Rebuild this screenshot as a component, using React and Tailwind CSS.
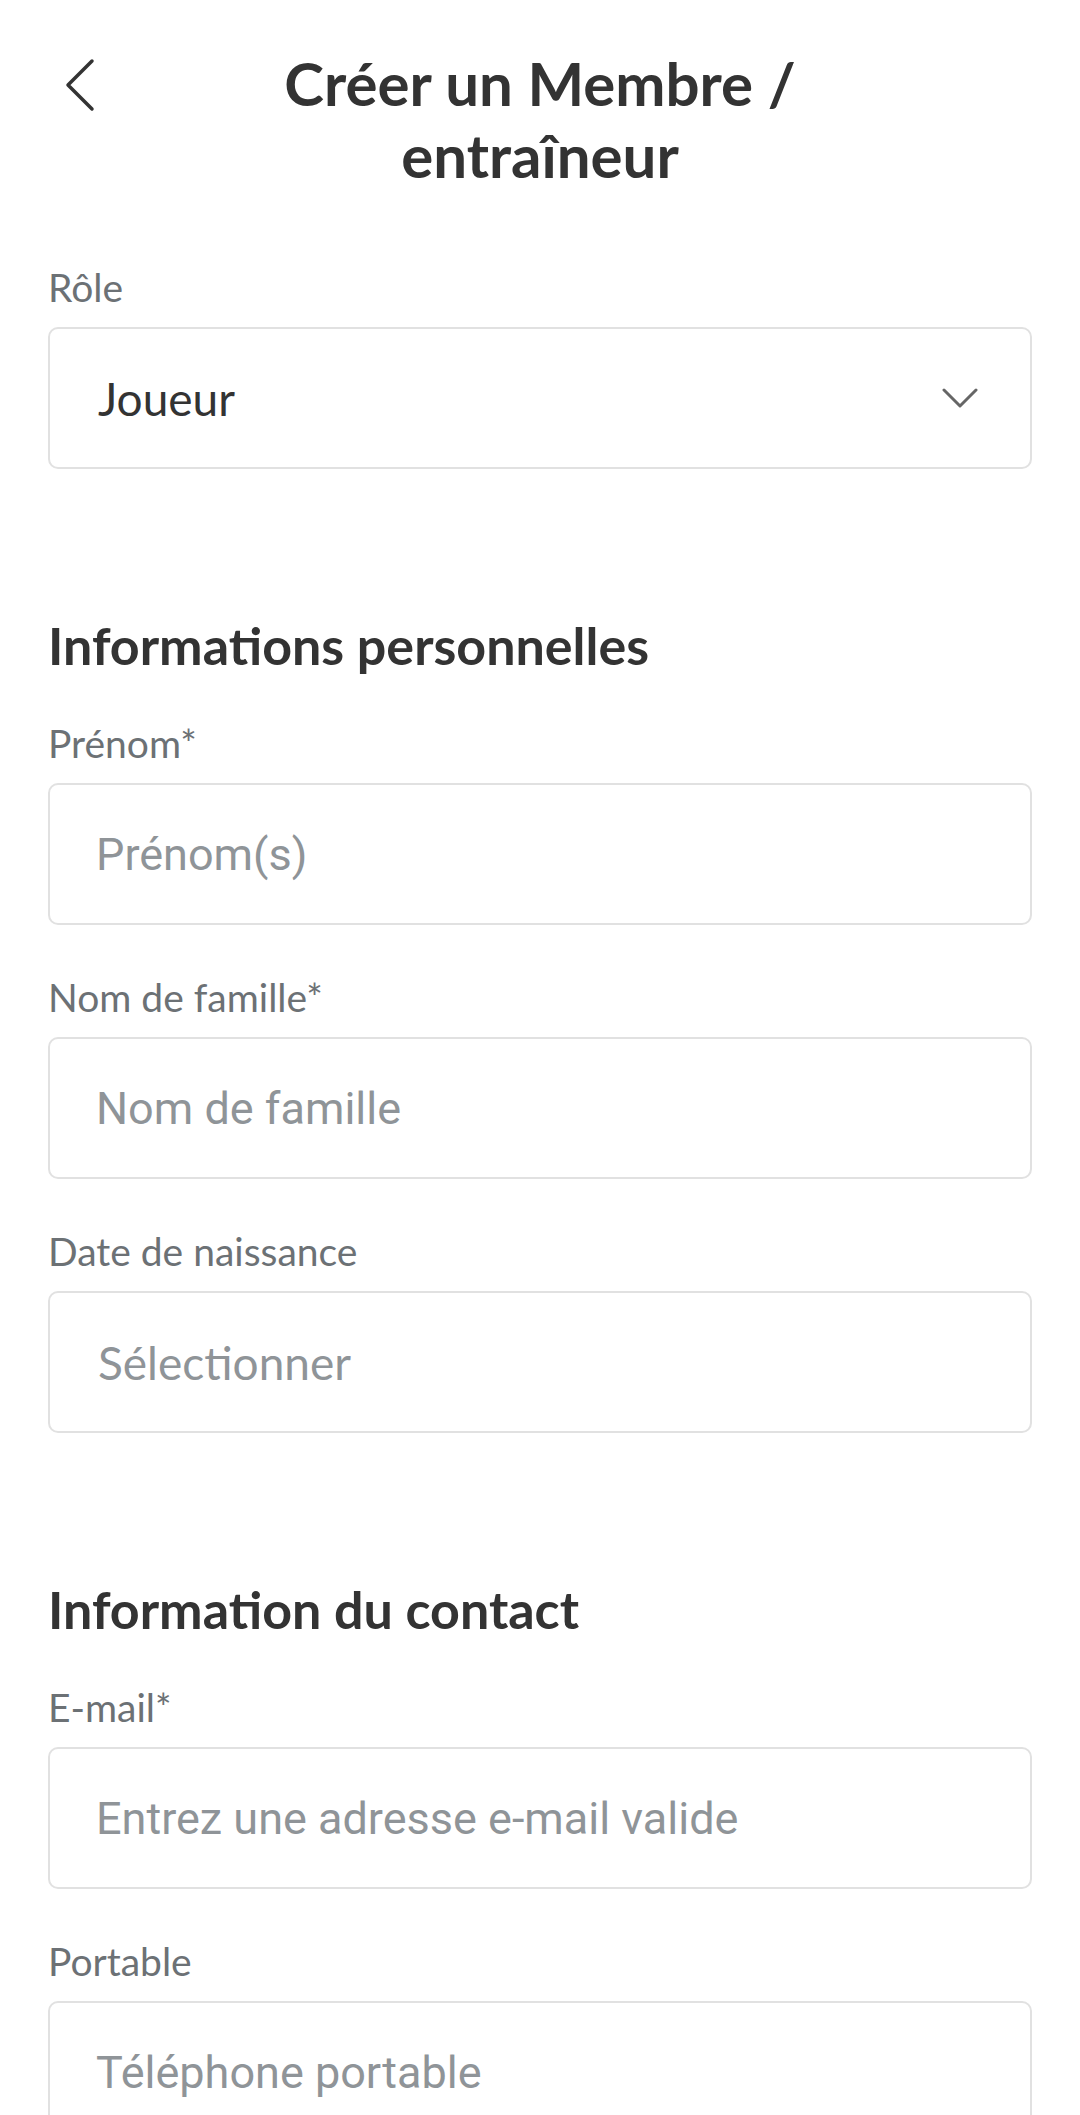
import { useState } from 'react'

const lato = { fontFamily: 'Lato, "Open Sans", sans-serif' }

function BackIcon() {
  return (
    <svg width="32" height="54" viewBox="0 0 32 54" fill="none" className="block">
      <path d="M28 3L4 27L28 51" stroke="#333333" strokeWidth="3.5" strokeLinecap="round" strokeLinejoin="round" />
    </svg>
  )
}

function ChevronDown() {
  return (
    <svg width="36" height="22" viewBox="0 0 36 22" fill="none" className="block">
      <path d="M2 3L18 19L34 3" stroke="#666666" strokeWidth="3" strokeLinecap="round" strokeLinejoin="round" />
    </svg>
  )
}

function Label({ children }) {
  return (
    <div className="text-[39px] leading-[48px] text-[#6c7175] font-['Lato',sans-serif]">{children}</div>
  )
}

function TextField({ label, placeholder, type = 'text' }) {
  const [value, setValue] = useState('')
  return (
    <div className="flex flex-col gap-[16px]">
      <Label>{label}</Label>
      <input
        type={type}
        value={value}
        onChange={(e) => setValue(e.target.value)}
        placeholder={placeholder}
        className="h-[142px] w-full rounded-[10px] border-2 border-[#e1e1e1] bg-white px-[46px] text-[45px] text-[#333333] font-['Roboto',sans-serif] placeholder:text-[#8f9498] outline-none"
      />
    </div>
  )
}

function SectionTitle({ children }) {
  return (
    <h2 className="mt-[146px] mb-[43px] text-[52px] leading-[61px] font-bold text-[#333333] font-['Lato',sans-serif]">
      {children}
    </h2>
  )
}

export default function App() {
  return (
    <div className="h-[2115px] overflow-hidden bg-white" style={lato}>
      {/* Header */}
      <div className="grid grid-cols-[1fr_620px_1fr] pt-[47px]">
        <div className="pl-[64px] pt-[11px]">
          <button className="block" aria-label="Retour">
            <BackIcon />
          </button>
        </div>
        <h1 className="text-center text-[60px] leading-[72px] font-bold text-[#333333] font-['Lato',sans-serif]">
          Créer un Membre / entraîneur
        </h1>
        <div />
      </div>

      <div className="px-[48px] pt-[72px]">
        {/* Role */}
        <div className="flex flex-col gap-[16px]">
          <Label>Rôle</Label>
          <button className="flex h-[142px] w-full items-center justify-between rounded-[10px] border-2 border-[#e1e1e1] bg-white pl-[48px] pr-[52px] text-left">
            <span className="text-[46px] text-[#333333] font-['Lato',sans-serif]">Joueur</span>
            <ChevronDown />
          </button>
        </div>

        <SectionTitle>Informations personnelles</SectionTitle>
        <div className="flex flex-col gap-[48px]">
          <TextField label="Prénom*" placeholder="Prénom(s)" />
          <TextField label="Nom de famille*" placeholder="Nom de famille" />
          <div className="flex flex-col gap-[16px]">
            <Label>Date de naissance</Label>
            <button className="flex h-[142px] w-full items-center rounded-[10px] border-2 border-[#e1e1e1] bg-white pl-[48px] text-left">
              <span className="text-[46px] text-[#8f9498] font-['Lato',sans-serif]">Sélectionner</span>
            </button>
          </div>
        </div>

        <SectionTitle>Information du contact</SectionTitle>
        <div className="flex flex-col gap-[48px]">
          <TextField label="E-mail*" placeholder="Entrez une adresse e-mail valide" type="email" />
          <TextField label="Portable" placeholder="Téléphone portable" type="tel" />
        </div>
      </div>
    </div>
  )
}
